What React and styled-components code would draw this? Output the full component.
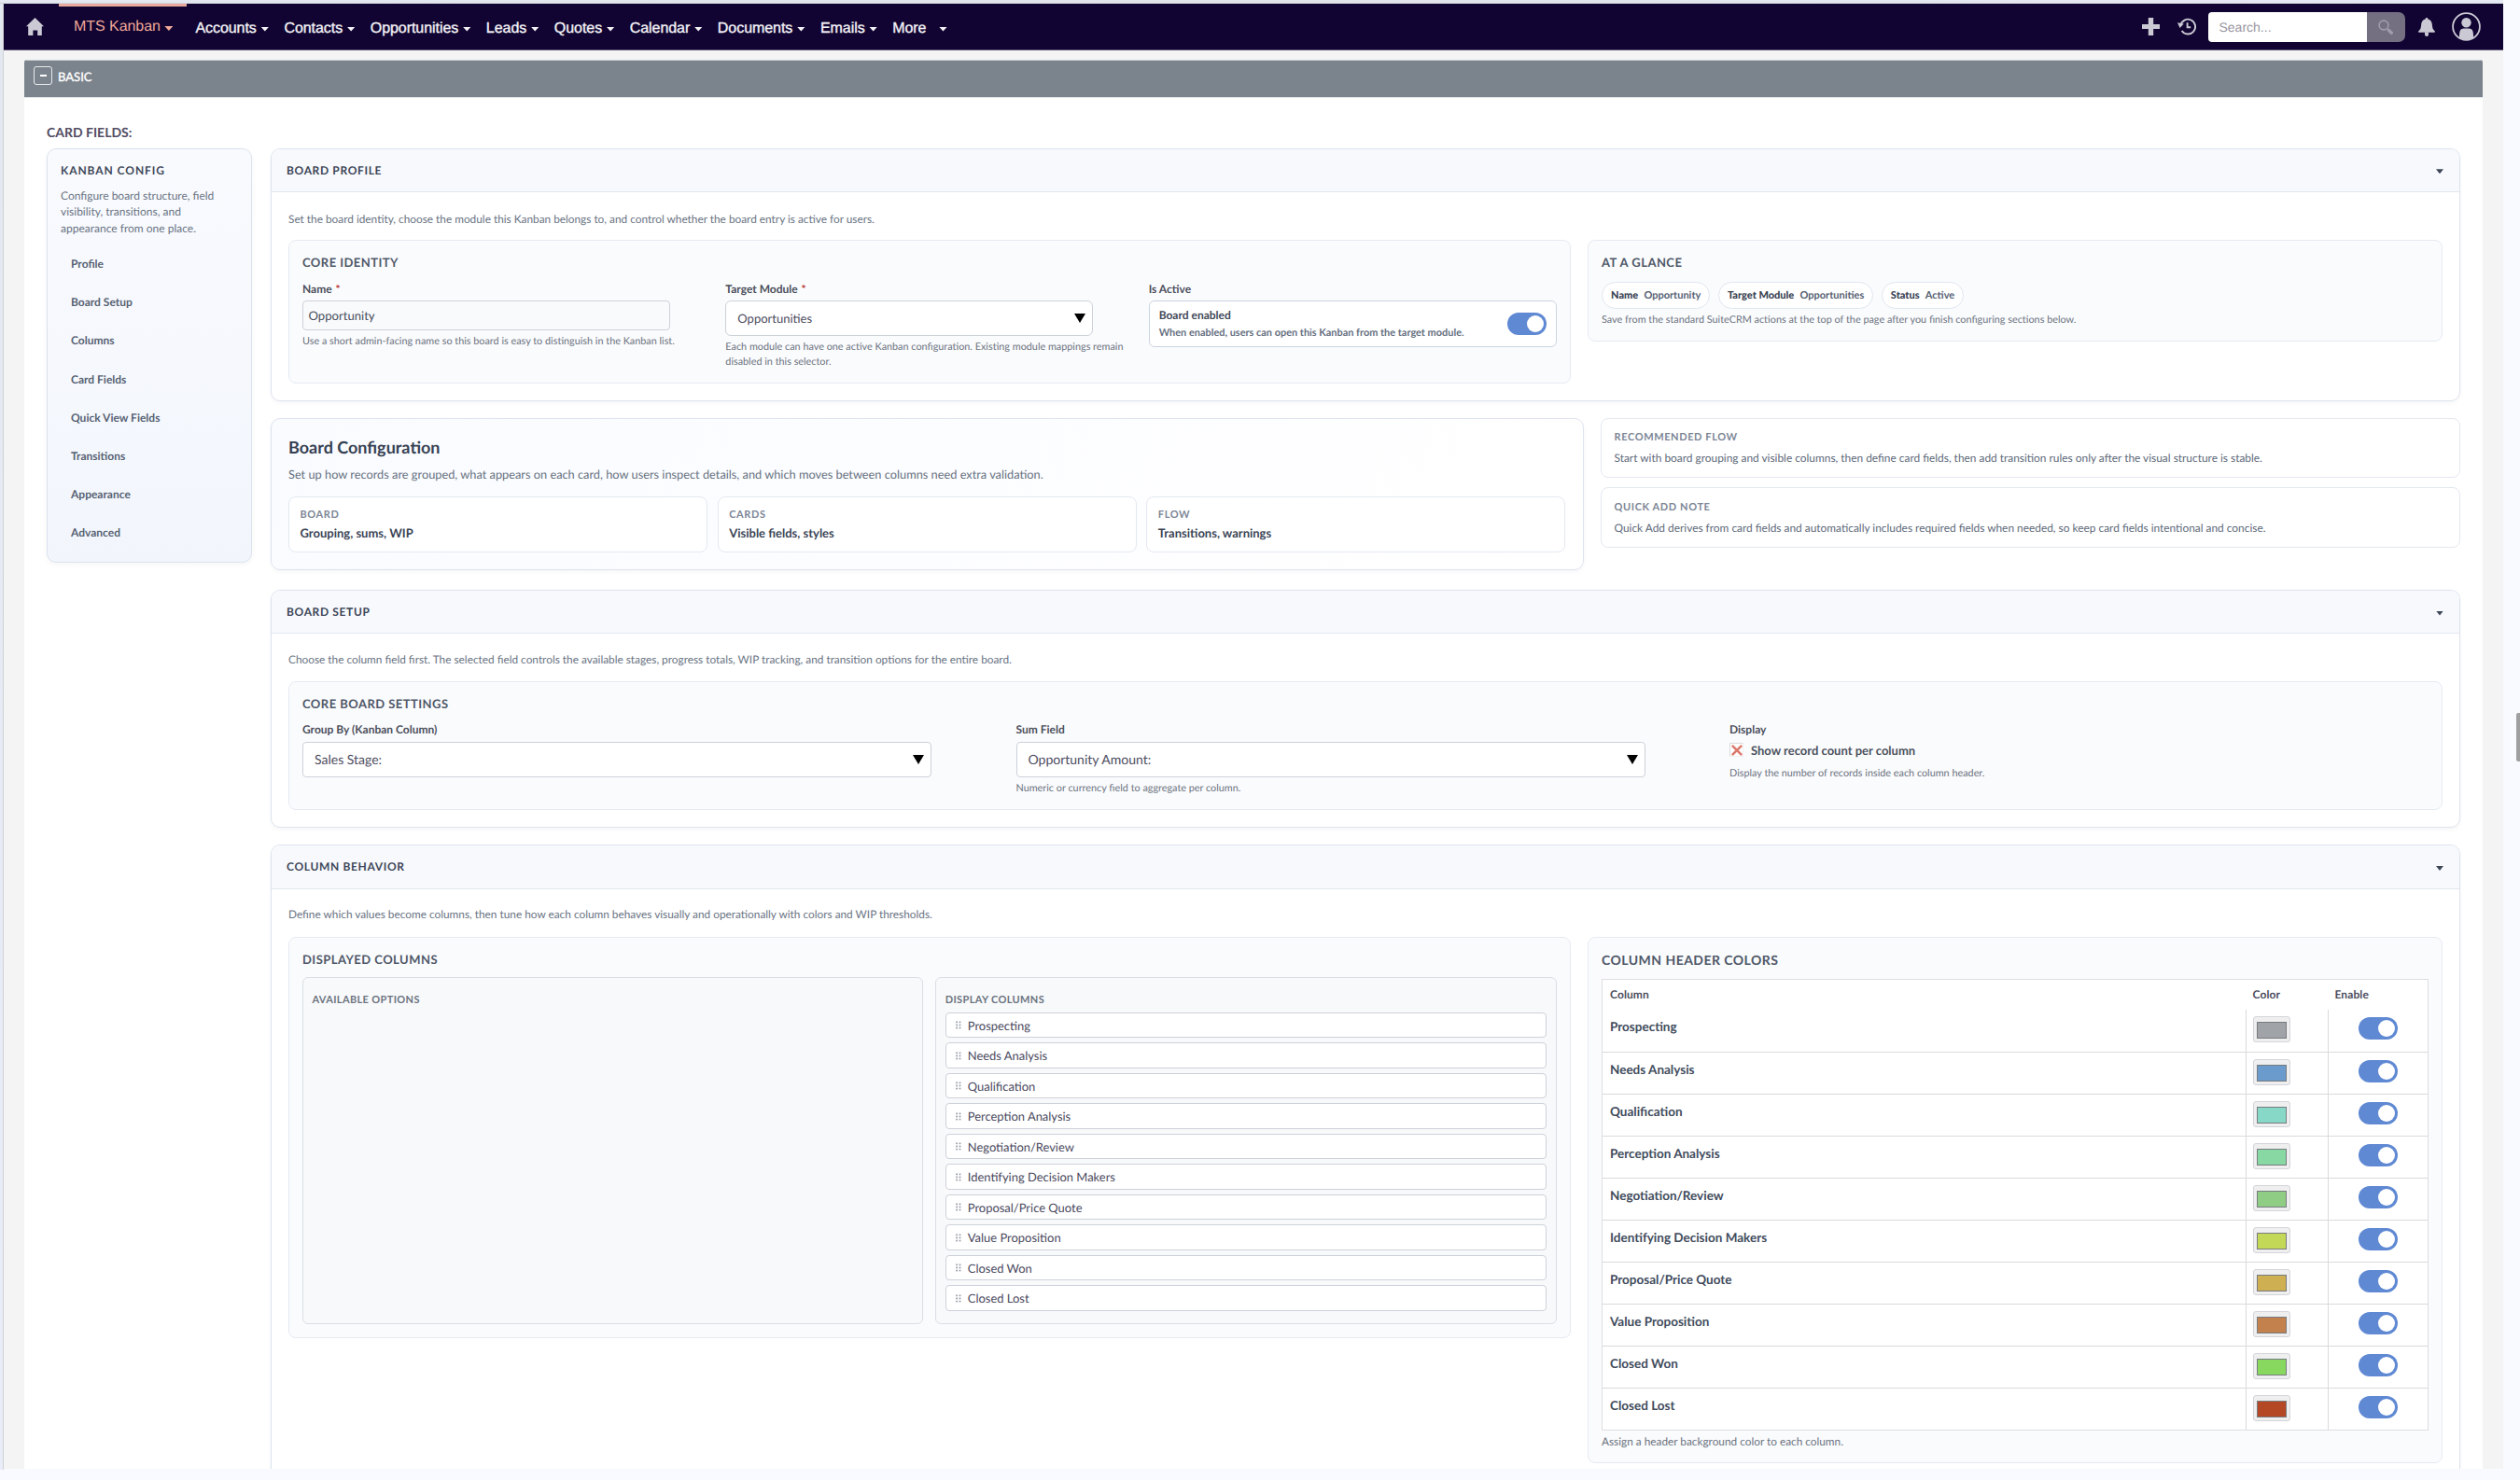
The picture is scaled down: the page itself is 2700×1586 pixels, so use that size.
import React from 'react';
import styled, { createGlobalStyle, css } from 'styled-components';

const GlobalStyle = createGlobalStyle`
  * { box-sizing: border-box; }
  body {
    margin: 0;
    background: #f8faff;
    font-family: Lato, 'Open Sans', sans-serif;
    text-rendering: geometricPrecision;
    color: #3f4757;
  }
`;

/* ---------- window ---------- */

const Window = styled.div`
  position: relative;
  display: flex;
  flex-direction: column;
  width: 2700px;
  height: 1586px;
  overflow: hidden;
`;

const TopEdge = styled.div`
  flex: none;
  height: 4px;
  background: linear-gradient(90deg, #e3e8f1, #e2e4ea 50%, #e6eaf5);
  border-bottom: 1px solid #cfd1d7;
  margin-right: 18px;
`;

const Body = styled.div`
  display: flex;
  height: 1571px;
`;

const LeftEdge = styled.div`
  flex: none;
  width: 4px;
  background: linear-gradient(180deg, #e3e8f0, #e9edf8);
  border-right: 1px solid #cfd1d6;
`;

const Frame = styled.div`
  width: 2678px;
  height: 1570px;
  overflow: hidden;
  background: #f4f4f4;
`;

const ScrollThumb = styled.div`
  position: absolute;
  right: 0;
  top: 764px;
  width: 4px;
  height: 52px;
  border-radius: 2px 0 0 2px;
  background: #9f9f9f;
`;

/* ---------- navigation ---------- */

const Nav = styled.nav`
  display: flex;
  align-items: stretch;
  height: 50px;
  padding: 0 24px;
  background: #110432;
  border-bottom: 1px solid #5a5170;
  font-family: 'Liberation Sans', Arial, sans-serif;
  font-size: 16px;
`;

const HomeLink = styled.a`
  display: flex;
  padding-top: 15px;
  width: 35px;
`;

const Caret = styled.span`
  flex: none;
  width: 9px;
  height: 5px;
  background: currentColor;
  clip-path: polygon(0 0, 100% 0, 50% 100%);
`;

const NavItem = styled.a`
  display: flex;
  align-items: center;
  gap: ${(p) => p.$gap || 4.5}px;
  padding: 4px 8.1px 0 8px;
  color: #f4f3f7;
  letter-spacing: -0.05px;
  -webkit-text-stroke: 0.35px currentColor;
  ${(p) =>
    p.$active &&
    css`
      padding: 1px 15px 0 16px;
      border-top: 3px solid #e8a99f;
      border-bottom: 3px solid transparent;
      color: #f0a898;
      margin-right: 1px;
      -webkit-text-stroke-width: 0;
    `}
  ${Caret} { margin-top: ${(p) => (p.$active ? 3 : 1)}px; }
`;

const NavTools = styled.div`
  display: flex;
  align-items: center;
  margin-left: auto;
  color: #cbc9d4;
  svg { display: block; flex: none; }
`;

const Search = styled.div`
  display: flex;
  width: 211px;
  height: 32px;
  margin: 0 14.5px 0 13px;
  border-radius: 4px 7px 7px 4px;
  overflow: hidden;
`;

const SearchInput = styled.div`
  width: 170px;
  padding-left: 12px;
  background: #fff;
  color: #9795a1;
  font-size: 14px;
  line-height: 32px;
`;

const SearchButton = styled.div`
  flex: 1;
  display: flex;
  align-items: center;
  justify-content: center;
  background: #747082;
`;

/* ---------- page ---------- */

const Panel = styled.main`
  margin: 10px 22px 0;
  height: 1520px;
  background: #fff;
  overflow: hidden;
  border-radius: 3px 3px 0 0;
`;

const PanelBar = styled.header`
  display: flex;
  gap: 6px;
  height: 40px;
  padding: 6px 0 0 10px;
  background: #7b848c;
  border-top: 1px solid #cfd2d5;
  color: #fff;
  font-size: 13px;
  line-height: 20px;
  -webkit-text-stroke: 0.35px currentColor;
`;

const Collapse = styled.span`
  display: flex;
  align-items: center;
  justify-content: center;
  width: 20px;
  height: 20px;
  border: 1px solid #e8eaec;
  border-radius: 3px;
  &::after {
    content: '';
    width: 7px;
    height: 2px;
    background: #fff;
  }
`;

const BarTitle = styled.span`
  padding-top: 1px;
`;

const Content = styled.div`
  padding: 27px 24px 0;
  border-top: 1px solid #e1e5ea;
`;

const FieldTitle = styled.h2`
  margin: 0 0 6.5px;
  font-size: 14px;
  line-height: 20px;
  font-weight: 700;
  color: #534d64;
`;

const Layout = styled.div`
  display: flex;
  align-items: flex-start;
  gap: 20px;
`;

const Sidebar = styled.aside`
  flex: none;
  width: 220px;
  height: 444.5px;
  padding: 15px 14px;
  border: 1px solid #dbe3ed;
  border-radius: 10px;
  background: linear-gradient(180deg, #f9fafe, #f2f6fc);
  box-shadow: 0 2px 6px rgba(15, 23, 42, 0.04);
`;

const SideTitle = styled.h3`
  margin: 0 0 10.5px;
  font-size: 12px;
  line-height: 16px;
  letter-spacing: 0.93px;
  color: #3f4858;
`;

const SideText = styled.p`
  margin: 0 0 9px;
  font-size: 12px;
  line-height: 17.4px;
  color: #6a7484;
`;

const SideLink = styled.a`
  display: flex;
  align-items: center;
  height: 41.1px;
  padding-left: 11px;
  font-size: 12px;
  font-weight: 700;
  color: #576273;
`;

const Main = styled.div`
  flex: 1;
  min-width: 0;
`;

const Card = styled.section`
  margin-bottom: ${(p) => p.$after ?? 19}px;
  border: 1px solid #dde4ee;
  border-radius: 10px;
  background: #fff;
  overflow: hidden;
  box-shadow: 0 2px 5px rgba(15, 23, 42, 0.04);
`;

const CardHead = styled.header`
  display: flex;
  align-items: center;
  justify-content: space-between;
  height: 46.4px;
  padding: 0 17px 0 16px;
  background: #f7f9fd;
  border-bottom: 1px solid #e2e7ef;
  color: #3d4657;
  font-size: 12px;
  font-weight: 700;
  letter-spacing: 0.65px;
  ${Caret} { width: 8px; margin-top: 3px; }
`;

const CardBody = styled.div`
  padding: ${(p) => p.$top ?? 18.8}px 18px 18px;
`;

const Lead = styled.p`
  margin: 0 0 ${(p) => p.$after ?? 14.3}px;
  font-size: 11.84px;
  line-height: 18px;
  color: #6a7484;
`;

const Columns = styled.div`
  display: grid;
  grid-template-columns: 1373.5fr 916fr;
  gap: 18.5px;
  align-items: start;
`;

const Box = styled.div`
  padding: 14px;
  border: 1px solid #e5eaf1;
  border-radius: 8px;
  background: #fafbfd;
`;

const BoxTitle = styled.h4`
  margin: 0 0 ${(p) => p.$after || 11.4}px;
  font-size: ${(p) => (p.$large ? 14 : 13)}px;
  line-height: ${(p) => (p.$large ? 20 : 18)}px;
  letter-spacing: 0.46px;
  color: #4f5868;
`;

const Fields = styled.div`
  display: grid;
  grid-template-columns: repeat(3, minmax(0, 1fr));
  gap: ${(p) => p.$gap}px;
`;

const Label = styled.div`
  margin-bottom: 4.4px;
  font-size: 12px;
  line-height: 16px;
  font-weight: 700;
  color: #4b4f5b;
  ${(p) => p.$tight && css`margin-bottom: 3.7px;`}
  i { margin-left: 1px; font-style: normal; color: #b93535; }
`;

const Input = styled.div`
  width: 394px;
  height: 32px;
  padding-left: 5.5px;
  border: 1px solid #ccd1d9;
  border-radius: 4px;
  background: #f9fafc;
  font-size: 13.1px;
  line-height: 30px;
  color: #474d5b;
`;

const Select = styled.div`
  display: flex;
  align-items: center;
  justify-content: space-between;
  width: ${(p) => (p.$large ? '90%' : '394px')};
  height: 38px;
  padding: 0 7px 0 12px;
  border: 1px solid #ccd1d9;
  border-radius: ${(p) => (p.$large ? 4 : 6)}px;
  background: #fff;
  font-size: ${(p) => (p.$large ? 14 : 13)}px;
  line-height: 18px;
  color: #4c4c60;
  &::after {
    content: '';
    border: 6px solid transparent;
    border-width: 10px 6px 0;
    border-top-color: #000;
  }
`;

const Hint = styled.p`
  margin: ${(p) => p.$top ?? 4}px 0 0;
  font-size: ${(p) => (p.$large ? 11.82 : 10.83)}px;
  line-height: ${(p) => (p.$large ? 16 : 15.6)}px;
  color: #6c7380;
`;

const SwitchBox = styled.div`
  display: flex;
  align-items: center;
  justify-content: space-between;
  height: 50px;
  padding: 0 10px;
  border: 1px solid #ccd5e0;
  border-radius: 6px;
  background: #fff;
`;

const SwitchText = styled.div`
  padding-top: 1.5px;
  font-weight: 700;
  line-height: 16px;
  font-size: 12px;
  color: #3f4858;
  small { display: block; margin-top: 2.4px; font-size: 10.95px; color: #66707f; }
`;

const Toggle = styled.span`
  display: flex;
  justify-content: flex-end;
  width: 42px;
  height: 24px;
  padding: 3px;
  border-radius: 12px;
  background: #6089d3;
  &::after {
    content: '';
    width: 18px;
    height: 18px;
    border-radius: 50%;
    background: #fff;
  }
`;

const Pills = styled.div`
  display: flex;
  gap: 8.6px;
`;

const Pill = styled.span`
  display: flex;
  align-items: center;
  gap: 6.2px;
  height: 29px;
  padding: 0 9px;
  border: 1px solid #dfe6ef;
  border-radius: 15px;
  background: #fff;
  font-size: 11px;
  font-weight: 700;
  color: #566072;
  b { color: #3a4354; }
`;

/* ---------- board configuration ---------- */

const Overview = styled.div`
  display: grid;
  grid-template-columns: 1406.5fr 921fr;
  gap: 18.5px;
  align-items: start;
  margin-bottom: 20.4px;
`;

const Hero = styled.section`
  padding: 18px;
  border: 1px solid #dde4ee;
  border-radius: 10px;
  background: linear-gradient(135deg, #f9fbff, #ffffff);
  box-shadow: 0 2px 5px rgba(15, 23, 42, 0.04);
`;

const HeroTitle = styled.h1`
  margin: 1px 0 8.6px;
  font-size: 18px;
  line-height: 22px;
  color: #364052;
`;

const HeroText = styled.p`
  margin: 0 0 14.2px;
  font-size: 12.79px;
  line-height: 20px;
  color: #667080;
`;

const Kicker = styled.div`
  font-size: 11px;
  line-height: 14px;
  font-weight: 700;
  letter-spacing: 0.61px;
  color: #7c8696;
`;

const Steps = styled.div`
  display: grid;
  grid-template-columns: repeat(3, 1fr);
  gap: 10.5px;
`;

const Step = styled.div`
  height: 60px;
  padding: 11.4px 11.5px;
  border: 1px solid #e3e8f0;
  border-radius: 8px;
  background: #fff;
  strong { display: block; margin-top: 3.6px; font-size: 13px; line-height: 18px; color: #3a4354; }
`;

const Notes = styled.div`
  display: grid;
  gap: 10.5px;
`;

const Note = styled.div`
  height: 64.3px;
  padding: 13.7px 13.5px 0;
  border: 1px solid #e3e8f0;
  border-radius: 8px;
  background: #fff;
  p { margin: 5.7px 0 0; font-size: 11.9px; line-height: 18px; color: #606a7a; }
`;

/* ---------- board setup ---------- */

const CheckRow = styled.div`
  display: flex;
  align-items: center;
  gap: 8px;
  height: 20px;
  margin-top: -1px;
  font-size: 13px;
  font-weight: 700;
  color: #4b505c;
`;

const CheckBox = styled.span`
  display: flex;
  align-items: center;
  justify-content: center;
  width: 15px;
  height: 15px;
  border: 1px solid #dcdcdf;
  border-right-color: #f1f1f3;
  border-bottom-color: #f1f1f3;
  background: #fdfdfd;
`;

/* ---------- column behaviour ---------- */

const Lists = styled.div`
  display: grid;
  grid-template-columns: 1fr 1fr;
  gap: 13px;
`;

const List = styled.div`
  height: 372px;
  padding: 17.2px 9.5px 0;
  border: 1px solid #dadfe6;
  border-radius: 6px;
  background: #f8f9fb;
`;

const ListTitle = styled.div`
  margin-bottom: 5.8px;
  font-size: 11px;
  line-height: 14px;
  font-weight: 700;
  letter-spacing: 0.36px;
  color: #6c7480;
`;

const Item = styled.div`
  display: flex;
  align-items: center;
  gap: 7px;
  height: 27.5px;
  margin-bottom: 5px;
  padding-left: 10px;
  border: 1px solid #cdd1d8;
  border-radius: 4px;
  background: #fff;
  font-size: 12.95px;
  color: #4b4a60;
`;

const Table = styled.div`
  border: 1px solid #dcdee1;
  background: #fff;
`;

const cells = css`
  display: grid;
  grid-template-columns: 688.5px 88px 1fr;
`;

const HeadRow = styled.div`
  ${cells}
  height: 32.4px;
  padding-top: 8.6px;
  font-size: 12px;
  line-height: 16px;
  font-weight: 700;
  letter-spacing: 0.1px;
  color: #4c4d5d;
  span { padding-left: 8px; }
`;

const Row = styled.div`
  ${cells}
  height: 45px;
  & + & { border-top: 1px solid #d9dadc; }
`;

const Cell = styled.div`
  padding: ${(p) => (p.$tight ? 7 : 8.6)}px 7.5px 0 8px;
  font-size: 13.5px;
  line-height: 18px;
  font-weight: 700;
  color: #414b5c;
  & + & { border-left: 1px solid #d9dadc; padding-left: 7.5px; }
  ${(p) => p.$center && css`&& { display: flex; justify-content: center; padding: 7.4px 0 0 0; }`}
`;

const Swatch = styled.span`
  display: block;
  width: 40px;
  height: 28px;
  padding: 5px 3px;
  border: 1px solid #d3d5da;
  border-radius: 3px;
  background: #efefef;
  &::after {
    content: '';
    display: block;
    height: 16px;
    border: 1px solid #777b80;
    background: ${(p) => p.$color};
  }
`;

const HomeIcon = () => (
  <svg width="19" height="19" viewBox="0 0 19 19" fill="#cbc9d4">
    <path d="M9.5 0 19 9.2h-2.2V19h-4.6v-5.6H7.4V19H2.2V9.2H0z" />
  </svg>
);

const PlusIcon = () => (
  <svg width="19" height="19" viewBox="0 0 19 19" fill="currentColor">
    <path d="M6.8 0h5.4v6.9H19v5.2h-6.8V19H6.8v-6.9H0V6.9h6.8z" />
  </svg>
);

const HistoryIcon = () => (
  <svg width="20" height="19" viewBox="0 0 20 19" fill="none" stroke="currentColor" strokeWidth="1.9" style={{ marginLeft: 19 }}>
    <path d="M3.4 8.2A7.9 7.9 0 1 1 4.6 14" />
    <path d="M0 5.2 6.8 6.6 2.6 11z" fill="currentColor" stroke="none" />
    <path d="M10.6 5.2v5h3.6" />
  </svg>
);

const SearchIcon = () => (
  <svg width="16" height="16" viewBox="0 0 16 16" fill="none" stroke="#9f9cab">
    <circle cx="6" cy="6" r="4.9" strokeWidth="1.6" />
    <path d="m10 10 1.5 1.5" strokeWidth="1.6" />
    <path d="m11.4 11.4 2.9 2.9" strokeWidth="3.4" strokeLinecap="round" />
  </svg>
);

const BellIcon = () => (
  <svg width="18" height="20" viewBox="0 0 18 20" fill="currentColor">
    <path d="M9 0c.9 0 1.4.6 1.4 1.6 3 .7 4.3 3 4.5 6.2.2 3.6.9 5.1 2.7 6.4.6.5.4 1.5-.4 1.5H.8c-.8 0-1-1-.4-1.5 1.8-1.3 2.5-2.8 2.7-6.4C3.3 4.6 4.6 2.3 7.6 1.6 7.6.6 8.1 0 9 0z" />
    <path d="M7 15.5h4V18a2 2 0 0 1-4 0z" />
  </svg>
);

const UserIcon = () => (
  <svg width="31" height="31" viewBox="0 0 31 31" fill="currentColor" style={{ marginLeft: 18 }}>
    <circle cx="15.5" cy="15.5" r="14.4" fill="none" stroke="currentColor" strokeWidth="1.8" />
    <circle cx="15.5" cy="11.2" r="5.2" />
    <path d="M8 27.5c-.2-6.5.6-10 4.8-10h5.4c4.2 0 5 3.5 4.8 10a14 14 0 0 1-15 0z" />
  </svg>
);

const CrossIcon = () => (
  <svg width="12" height="12" viewBox="0 0 12 12" fill="none" stroke="#dc7a6e" strokeWidth="2.6" strokeLinecap="round">
    <path d="m1.6 1.6 8.8 8.8m0-8.8-8.8 8.8" />
  </svg>
);

const GripIcon = () => (
  <svg width="6" height="9" viewBox="0 0 6 9" fill="#9a9fa9">
    {[0.5, 3.6, 6.7].map((y) => [0.2, 3.6].map((x) => <rect key={`${x}-${y}`} x={x} y={y} width="1.8" height="1.7" />))}
  </svg>
);

const menu = ['Accounts', 'Contacts', 'Opportunities', 'Leads', 'Quotes', 'Calendar', 'Documents', 'Emails'];
const sections = ['Profile', 'Board Setup', 'Columns', 'Card Fields', 'Quick View Fields', 'Transitions', 'Appearance', 'Advanced'];
const stages = [
  ['Prospecting', '#a0a3a8'],
  ['Needs Analysis', '#6b9bcd'],
  ['Qualification', '#88d8c8'],
  ['Perception Analysis', '#88d8a3'],
  ['Negotiation/Review', '#90cd84'],
  ['Identifying Decision Makers', '#c4d857'],
  ['Proposal/Price Quote', '#ceb053'],
  ['Value Proposition', '#c2814d'],
  ['Closed Won', '#88d85f'],
  ['Closed Lost', '#b54824'],
];

const Section = ({ title, lead, after, top, leadAfter, children }) => (
  <Card $after={after}>
    <CardHead>
      {title}
      <Caret />
    </CardHead>
    <CardBody $top={top}>
      <Lead $after={leadAfter}>{lead}</Lead>
      {children}
    </CardBody>
  </Card>
);

export default function App() {
  return (
    <Window>
      <GlobalStyle />
      <TopEdge />
      <Body>
        <LeftEdge />
        <Frame>
          <Nav>
            <HomeLink><HomeIcon /></HomeLink>
            <NavItem $active>MTS Kanban<Caret /></NavItem>
            {menu.map((m) => (
              <NavItem key={m}>{m}<Caret /></NavItem>
            ))}
            <NavItem $gap={13.5}>More<Caret /></NavItem>
            <NavTools>
              <PlusIcon />
              <HistoryIcon />
              <Search>
                <SearchInput>Search...</SearchInput>
                <SearchButton><SearchIcon /></SearchButton>
              </Search>
              <BellIcon />
              <UserIcon />
            </NavTools>
          </Nav>
          <Panel>
            <PanelBar>
              <Collapse />
              <BarTitle>BASIC</BarTitle>
            </PanelBar>
            <Content>
              <FieldTitle>CARD FIELDS:</FieldTitle>
              <Layout>
                <Sidebar>
                  <SideTitle>KANBAN CONFIG</SideTitle>
                  <SideText>Configure board structure, field visibility, transitions, and appearance from one place.</SideText>
                  {sections.map((s) => (
                    <SideLink key={s}>{s}</SideLink>
                  ))}
                </Sidebar>
                <Main>
                  <Section
                    top={20.3}
                    leadAfter={13}
                    after={18}
                    title="BOARD PROFILE"
                    lead="Set the board identity, choose the module this Kanban belongs to, and control whether the board entry is active for users."
                  >
                    <Columns>
                      <Box>
                        <BoxTitle $after={12}>CORE IDENTITY</BoxTitle>
                        <Fields $gap={16.5}>
                          <div>
                            <Label $tight>Name <i>*</i></Label>
                            <Input>Opportunity</Input>
                            <Hint $top={4.6}>Use a short admin-facing name so this board is easy to distinguish in the Kanban list.</Hint>
                          </div>
                          <div>
                            <Label $tight>Target Module <i>*</i></Label>
                            <Select>Opportunities</Select>
                            <Hint $top={4.6}>Each module can have one active Kanban configuration. Existing module mappings remain disabled in this selector.</Hint>
                          </div>
                          <div>
                            <Label $tight>Is Active</Label>
                            <SwitchBox>
                              <SwitchText>
                                Board enabled
                                <small>When enabled, users can open this Kanban from the target module.</small>
                              </SwitchText>
                              <Toggle />
                            </SwitchBox>
                          </div>
                        </Fields>
                      </Box>
                      <Box>
                        <BoxTitle>AT A GLANCE</BoxTitle>
                        <Pills>
                          <Pill><b>Name</b>Opportunity</Pill>
                          <Pill><b>Target Module</b>Opportunities</Pill>
                          <Pill><b>Status</b>Active</Pill>
                        </Pills>
                        <Hint $top={4.6}>Save from the standard SuiteCRM actions at the top of the page after you finish configuring sections below.</Hint>
                      </Box>
                    </Columns>
                  </Section>

                  <Overview>
                    <Hero>
                      <HeroTitle>Board Configuration</HeroTitle>
                      <HeroText>Set up how records are grouped, what appears on each card, how users inspect details, and which moves between columns need extra validation.</HeroText>
                      <Steps>
                        <Step><Kicker>BOARD</Kicker><strong>Grouping, sums, WIP</strong></Step>
                        <Step><Kicker>CARDS</Kicker><strong>Visible fields, styles</strong></Step>
                        <Step><Kicker>FLOW</Kicker><strong>Transitions, warnings</strong></Step>
                      </Steps>
                    </Hero>
                    <Notes>
                      <Note>
                        <Kicker>RECOMMENDED FLOW</Kicker>
                        <p>Start with board grouping and visible columns, then define card fields, then add transition rules only after the visual structure is stable.</p>
                      </Note>
                      <Note>
                        <Kicker>QUICK ADD NOTE</Kicker>
                        <p>Quick Add derives from card fields and automatically includes required fields when needed, so keep card fields intentional and concise.</p>
                      </Note>
                    </Notes>
                  </Overview>

                  <Section
                    after={18.6}
                    title="BOARD SETUP"
                    lead="Choose the column field first. The selected field controls the available stages, progress totals, WIP tracking, and transition options for the entire board."
                  >
                    <Box>
                      <BoxTitle $after={11}>CORE BOARD SETTINGS</BoxTitle>
                      <Fields $gap={15.5}>
                        <div>
                          <Label>Group By (Kanban Column)</Label>
                          <Select $large>Sales Stage:</Select>
                        </div>
                        <div>
                          <Label>Sum Field</Label>
                          <Select $large>Opportunity Amount:</Select>
                          <Hint $top={4.4}>Numeric or currency field to aggregate per column.</Hint>
                        </div>
                        <div>
                          <Label>Display</Label>
                          <CheckRow>
                            <CheckBox><CrossIcon /></CheckBox>
                            Show record count per column
                          </CheckRow>
                          <Hint $top={7.4}>Display the number of records inside each column header.</Hint>
                        </div>
                      </Fields>
                    </Box>
                  </Section>

                  <Section
                    title="COLUMN BEHAVIOR"
                    lead="Define which values become columns, then tune how each column behaves visually and operationally with colors and WIP thresholds."
                  >
                    <Columns>
                      <Box>
                        <BoxTitle $after={10}>DISPLAYED COLUMNS</BoxTitle>
                        <Lists>
                          <List>
                            <ListTitle>AVAILABLE OPTIONS</ListTitle>
                          </List>
                          <List>
                            <ListTitle>DISPLAY COLUMNS</ListTitle>
                            {stages.map(([name]) => (
                              <Item key={name}><GripIcon />{name}</Item>
                            ))}
                          </List>
                        </Lists>
                      </Box>
                      <Box>
                        <BoxTitle $large $after={10}>COLUMN HEADER COLORS</BoxTitle>
                        <Table>
                          <HeadRow><span>Column</span><span>Color</span><span>Enable</span></HeadRow>
                          {stages.map(([name, color]) => (
                            <Row key={name}>
                              <Cell>{name}</Cell>
                              <Cell $tight><Swatch $color={color} /></Cell>
                              <Cell $center><Toggle /></Cell>
                            </Row>
                          ))}
                        </Table>
                        <Hint $large>Assign a header background color to each column.</Hint>
                      </Box>
                    </Columns>
                  </Section>
                </Main>
              </Layout>
            </Content>
          </Panel>
        </Frame>
      </Body>
      <ScrollThumb />
    </Window>
  );
}
